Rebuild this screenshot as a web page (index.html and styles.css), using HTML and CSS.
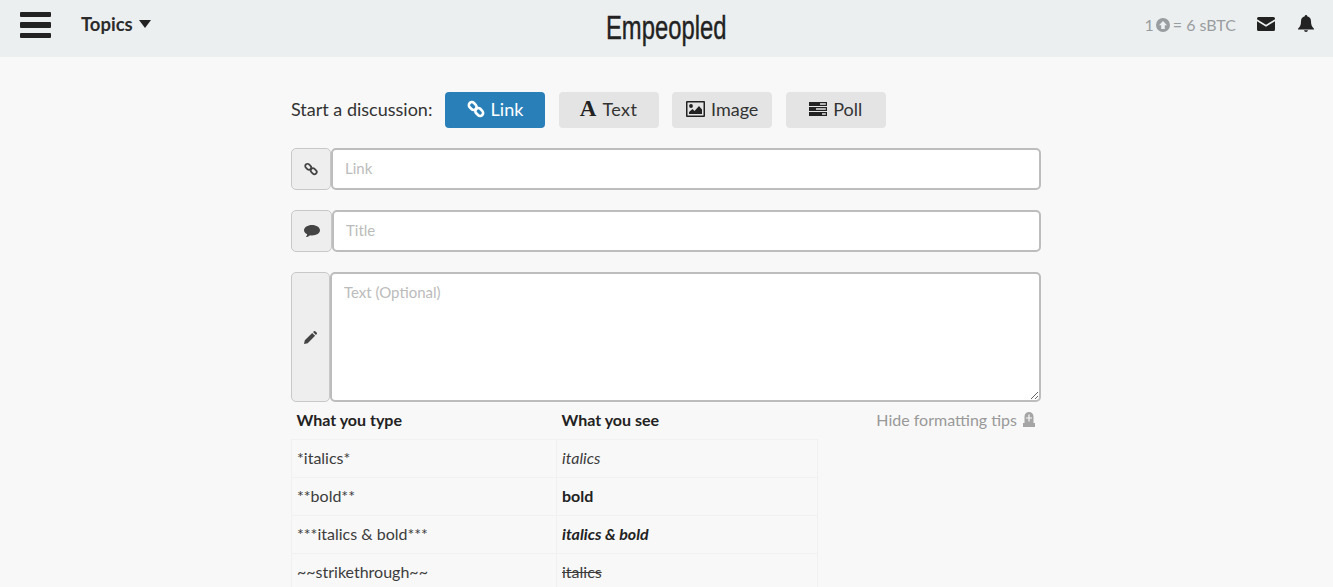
FILE: index.html
```html
<!DOCTYPE html>
<html lang="en">
<head>
  <meta charset="UTF-8" />
  <title>Empeopled</title>
  <link rel="stylesheet" href="styles.css">
</head>
<body>
  <header class="topbar">
    <div class="topbar-left">
      <div class="burger"><span></span><span></span><span></span></div>
      <a class="topics">Topics
        <svg class="caret" viewBox="0 0 12 8" width="12" height="8"><path d="M0 0h12L6 8z"/></svg>
      </a>
    </div>
    <div class="brand">Empeopled</div>
    <div class="topbar-right">
      <span class="rate">1
        <svg class="up-circle" viewBox="0 0 14 14" width="14" height="14"><circle cx="7" cy="7" r="7"/><path fill="#eceff0" d="M7 3l4 4.200H8.800V11H5.200V7.200H3z"/></svg>
        = 6 sBTC</span>
      <svg class="top-icon mail" viewBox="0 0 18 14" width="18" height="14"><path d="M1.500 0h15A1.500 1.500 0 0 1 18 1.500v.7L9 7.800 0 2.200v-.7A1.500 1.500 0 0 1 1.500 0zM0 4.200l9 5.600 9-5.600v8.300a1.500 1.500 0 0 1-1.500 1.500h-15A1.500 1.500 0 0 1 0 12.500z"/></svg>
      <svg class="top-icon bell" viewBox="0 0 16 17" width="16" height="17"><path d="M8 0a1.200 1.200 0 0 1 1.200 1.300C11.700 1.800 13 3.800 13 6.300c0 4 1 5.700 3 7.400v.8H0v-.8c2-1.700 3-3.400 3-7.400 0-2.500 1.300-4.500 3.800-5A1.200 1.200 0 0 1 8 0zM6 15.300h4A2 2 0 0 1 8 17a2 2 0 0 1-2-1.700z"/></svg>
    </div>
  </header>

  <main class="content">
    <div class="type-row">
      <span class="type-label">Start a discussion:</span>
      <button class="type-btn active">
        <svg class="chain" viewBox="0 0 18 18" width="18" height="18"><g fill="none" stroke="currentColor" stroke-width="2.600"><rect x="1.500" y="3" width="8.500" height="6" rx="3" transform="rotate(45 5.700 6)"/><rect x="8" y="9" width="8.500" height="6" rx="3" transform="rotate(45 12.200 12)"/></g></svg>
        Link
      </button>
      <button class="type-btn"><span class="font-a">A</span> <span class="wide">Text</span></button>
      <button class="type-btn">
        <svg viewBox="0 0 19 16" width="19" height="16"><path fill-rule="evenodd" d="M1 0h17a1 1 0 0 1 1 1v14a1 1 0 0 1-1 1H1a1 1 0 0 1-1-1V1a1 1 0 0 1 1-1zm.500 1.500v13h16v-13z"/><circle cx="5" cy="5" r="1.900"/><path d="M3 13v-2l3.500-3 2 2 4.500-5 3 3.500V13z"/></svg>
        Image
      </button>
      <button class="type-btn">
        <svg viewBox="0 0 18 14" width="18" height="14"><path d="M0 0h18v4H0zM0 5h18v4H0zM0 10h18v4H0z"/><path fill="#e4e4e4" d="M11 1.200h5.800v1.600H11zM7 6.200h9.800v1.600H7zM13 11.200h3.800v1.600H13z"/></svg>
        Poll
      </button>
    </div>

    <div class="field">
      <span class="addon addon-link">
        <svg viewBox="0 0 14 14" width="14" height="14"><g fill="none" stroke="#444" stroke-width="1.800"><rect x="1" y="2.500" width="6.500" height="4.500" rx="2.200" transform="rotate(45 4.200 4.700)"/><rect x="6.500" y="7" width="6.500" height="4.500" rx="2.200" transform="rotate(45 9.700 9.200)"/></g></svg>
      </span>
      <input class="box" type="text" placeholder="Link">
    </div>

    <div class="field">
      <span class="addon addon-title">
        <svg viewBox="0 0 16 14" width="16" height="14"><path fill="#444" d="M8 1c4.400 0 8 2.300 8 5.200s-3.600 5.200-8 5.200c-.7 0-1.300 0-2-.2C5 12.200 3.500 13 1.800 13c.8-.8 1.300-1.800 1.400-2.700C1.200 9.400 0 7.900 0 6.200 0 3.300 3.600 1 8 1z"/></svg>
      </span>
      <input class="box" type="text" placeholder="Title">
    </div>

    <div class="field field-text">
      <span class="addon addon-text">
        <svg viewBox="0 0 13 13" width="13" height="13"><path fill="#444" d="M0 13l.8-3.700 7.400-7.400 2.900 2.900-7.400 7.400zM9 1.100l.7-.7a1.300 1.300 0 0 1 1.800 0l1.100 1.100a1.300 1.300 0 0 1 0 1.800l-.7.700z"/></svg>
      </span>
      <textarea class="box" placeholder="Text (Optional)"></textarea>
    </div>

    <div class="tips">
      <table class="tips-table">
        <thead>
          <tr><th>What you type</th><th>What you see</th></tr>
        </thead>
        <tbody>
          <tr><td>*italics*</td><td><em>italics</em></td></tr>
          <tr><td>**bold**</td><td><strong>bold</strong></td></tr>
          <tr><td>***italics &amp; bold***</td><td><strong><em>italics &amp; bold</em></strong></td></tr>
          <tr><td>~~strikethrough~~</td><td><s>italics</s></td></tr>
        </tbody>
      </table>
      <a class="hide-tips">Hide formatting tips
        <svg viewBox="0 0 12 15" width="12" height="15"><path fill="#a5a5a5" fill-rule="evenodd" d="M6 0a4.500 4.500 0 0 1 4.500 4.500V11H12v4H0v-4h1.500V4.500A4.500 4.500 0 0 1 6 0zM5.400 2.500v3H3v1h2.400v3h1.200v-3H9v-1H6.600v-3z"/></svg>
      </a>
    </div>
  </main>
</body>
</html>
```

FILE: styles.css
```css
html {
  overflow: hidden;
}
body {
  margin: 0;
  background: #f8f8f8;
  color: #222;
  font-family: Lato, "Open Sans", sans-serif;
}
.topbar {
  display: grid;
  grid-template-columns: 1fr auto 1fr;
  align-items: center;
  height: 57px;
  background: #eceff0;
}
.topbar-left {
  display: flex;
  align-items: center;
  padding-left: 20px;
}
.burger {
  display: flex;
  flex-direction: column;
  gap: 5px;
  width: 31px;
  margin-top: -7px;
}
.burger span {
  height: 5.500px;
  background: #222;
  border-radius: 1px;
}
.topics {
  display: flex;
  align-items: center;
  gap: 6px;
  margin-left: 30px;
  margin-top: -9px;
  font-size: 18.500px;
  font-weight: 700;
  color: #2b2b2b;
}
.caret {
  fill: #222;
}
.brand {
  width: 120px;
  margin-top: -3px;
  margin-left: -1px;
  font-family: "Liberation Sans", sans-serif;
  font-size: 34px;
  line-height: 40px;
  color: #222;
  white-space: nowrap;
  transform: scaleX(.7);
  transform-origin: left center;
  -webkit-text-stroke: .4px #222;
}
.topbar-right {
  display: flex;
  align-items: center;
  justify-content: flex-end;
  padding-right: 19px;
  margin-top: -8px;
}
.rate {
  display: flex;
  align-items: center;
  gap: 3px;
  font-size: 16px;
  color: #9a9d9f;
}
.up-circle {
  fill: #9a9d9f;
  margin-left: -1px;
}
.top-icon {
  fill: #222;
  margin-left: 21px;
}
.mail {
  margin-top: -2px;
}
.bell {
  margin-left: 23px;
  margin-top: -3px;
}

.content {
  width: 750px;
  margin: 0 auto;
  padding: 35px 1px 0 0;
}
.type-row {
  display: flex;
  align-items: center;
  margin-bottom: 20px;
}
.type-label {
  font-size: 18px;
  width: 154px;
  padding-bottom: 2px;
  color: #333;
}
.type-btn {
  display: flex;
  align-items: center;
  justify-content: center;
  gap: 6px;
  width: 100px;
  height: 36px;
  margin-right: 13.600px;
  padding: 0 0 2px;
  border: 0;
  border-radius: 4px;
  background: #e4e4e4;
  color: #333;
  font-family: inherit;
  font-size: 18px;
}
.type-btn svg {
  fill: #222;
}
.type-btn.active {
  background: #2980b9;
  color: #fff;
}
.chain {
  color: #fff;
}
.type-btn .chain {
  fill: none;
}
.font-a {
  font-family: "Liberation Serif", serif;
  font-weight: 700;
  font-size: 23px;
  color: #222;
}
.wide {
  letter-spacing: .4px;
}

.field {
  display: flex;
  height: 42px;
  margin-bottom: 20px;
}
.field-text {
  height: 130px;
  margin-bottom: 0;
}
.addon {
  display: flex;
  align-items: center;
  justify-content: center;
  flex: none;
  box-sizing: border-box;
  border: 1px solid #c8c8c8;
  border-radius: 5px;
  background: #eee;
}
.addon-link {
  width: 40px;
}
.addon-title {
  width: 41px;
}
.addon-text {
  width: 39px;
}
.box {
  flex: 1;
  box-sizing: border-box;
  margin: 0;
  padding: 0 12px 2px;
  border: 2px solid #bdbdbd;
  border-radius: 5px;
  background: #fff;
  font-family: inherit;
  font-size: 15px;
  color: #333;
  outline: none;
}
textarea.box {
  padding-top: 9px;
  line-height: 18px;
}
.box::placeholder {
  color: #bbb;
  opacity: 1;
}

.tips {
  display: flex;
  justify-content: space-between;
  align-items: flex-start;
}
.tips-table {
  width: 527px;
  table-layout: fixed;
  border-collapse: collapse;
  font-size: 16px;
}
.tips-table th {
  height: 37px;
  padding: 0 5px 2px;
  box-sizing: border-box;
  text-align: left;
  font-size: 16px;
  font-weight: 700;
  color: #222;
}
.tips-table th:first-child {
  width: 265px;
}
.tips-table td {
  height: 38px;
  padding: 0 5px 2px;
  box-sizing: border-box;
  border: 1px solid #f1f1f1;
  color: #3c3c3c;
}
.tips-table strong {
  color: #222;
}
.hide-tips {
  display: flex;
  align-items: center;
  gap: 6px;
  height: 35px;
  padding-right: 6px;
  font-size: 16px;
  color: #999;
}
```
